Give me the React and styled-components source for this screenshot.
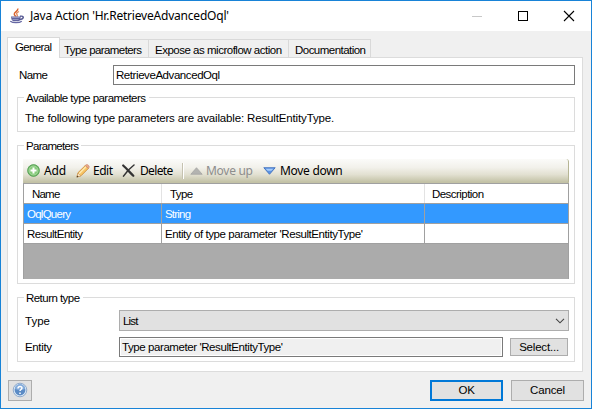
import React from "react";
import styled, { createGlobalStyle } from "styled-components";

const GlobalStyle = createGlobalStyle`
  * { box-sizing: border-box; }
  body { margin: 0; background: #fff; }
`;

const Text = styled.span`
  font: 11.5px/14px "Liberation Sans", Arial, sans-serif;
  letter-spacing: ${(p) => p.$track ?? 0}px;
  color: ${(p) => p.$color ?? "#000"};
  white-space: pre;
`;
const UiText = styled(Text)`
  font: 12px/16px "Noto Sans", sans-serif;
`;

const Window = styled.div`
  width: 592px;
  height: 409px;
  border: 1px solid #1883d7;
  background: #f0f0f0;
  display: flex;
  flex-direction: column;
  overflow: hidden;
`;
const TitleBar = styled.header`
  height: 30px;
  flex: none;
  background: #fff;
  display: flex;
  align-items: center;
  padding: 0 16px 0 9px;
`;
const Caption = styled(UiText)`
  margin-left: 4px;
  flex: 1;
`;
const WindowControls = styled.div`
  display: flex;
  gap: 34px;
  svg { display: block; }
`;
const Tabs = styled.nav`
  display: flex;
  align-items: flex-end;
  height: 27px;
  flex: none;
  margin: 0 0 -1px 6px;
`;
const Tab = styled.div`
  width: ${(p) => p.$width}px;
  height: ${(p) => (p.$active ? 21 : 19)}px;
  border: 1px solid #d9d9d9;
  border-width: ${(p) => (p.$active ? "1px 1px 0" : "1px 1px 1px 0")};
  background: ${(p) => (p.$active ? "#fff" : "#f0f0f0")};
  padding: ${(p) => (p.$active ? 2 : 3)}px 0 0 ${(p) => p.$inset}px;
  display: flex;
  position: relative;
  z-index: ${(p) => (p.$active ? 1 : 0)};
`;
const Panel = styled.main`
  width: 576px;
  height: 315px;
  flex: none;
  margin-left: 6px;
  border: 1px solid #dcdcdc;
  background: #fff;
  padding: 7px 7px 0 9px;
  display: flex;
  flex-direction: column;
`;
const NameRow = styled.div`
  display: flex;
  align-items: center;
  height: 20px;
  padding-left: 2px;
`;
const FieldLabel = styled(Text)`
  width: ${(p) => p.$width}px;
  flex: none;
`;
const TextField = styled.div`
  flex: 1;
  height: 20px;
  border: 1px solid #7a7a7a;
  background: ${(p) => (p.$readOnly ? "#f0f0f0" : "#fff")};
  box-shadow: inset 0 0 0 1px #fff;
  display: flex;
  align-items: center;
  padding-left: 2px;
`;
const Group = styled.section`
  height: ${(p) => p.$height}px;
  margin-top: ${(p) => p.$gap}px;
  border: 1px solid #dcdcdc;
  display: flex;
  flex-direction: column;
  padding: 0 5px;
  flex: none;
`;
const Legend = styled(Text)`
  align-self: flex-start;
  background: #fff;
  margin: -7px 0 1px 1px;
  padding: 0 3px 0 2px;
  height: 14px;
  flex: none;
`;
const GroupBody = styled.div`
  padding: 5px 0 0 2px;
  display: flex;
`;
const ToolBar = styled.div`
  height: 25px;
  margin-top: 5px;
  width: 546px;
  flex: none;
  display: flex;
  align-items: center;
  background: linear-gradient(#fbfbf9, #f2f1eb 35%, #e2e0d1 65%, #c3c2a6 96%);
  border-bottom: 1px solid #a3a380;
  border-right: 1px solid #b6b594;
  border-radius: 0 3px 2px 3px;
  padding: 0 0 1px 4px;
`;
const Tool = styled.div`
  display: flex;
  align-items: center;
  width: ${(p) => p.$width}px;
  svg { display: block; margin-right: ${(p) => p.$gap}px; flex: none; }
`;
const Divider = styled.i`
  width: 2px;
  height: 16px;
  background: #c5c2b0;
  border-right: 1px solid #fff;
  margin-right: 6px;
`;
const Grid = styled.div`
  width: 546px;
  height: 96px;
  margin-top: -1px;
  background: #ababab;
  border: 1px solid #a0a0a0;
  border-bottom: 0;
  flex: none;
`;
const GridRow = styled.div`
  display: grid;
  grid-template-columns: 138px 263px 143px;
  height: 20px;
  border-bottom: 1px solid #a0a0a0;
  background: ${(p) => (p.$selected ? "#3399ff" : "#fff")};
`;
const Cell = styled.div`
  display: flex;
  align-items: center;
  padding: ${(p) => (p.$head ? "1px 0 0 8px" : "0 0 0 3px")};
  border-right: 1px solid ${(p) => (p.$head ? "#e3e3e3" : "#a0a0a0")};
  &:last-child { border-right: 0; padding-left: 7px; }
`;
const FormRow = styled.div`
  display: flex;
  align-items: center;
  padding: 0 ${(p) => p.$inset ?? 0}px 0 2px;
  height: ${(p) => p.$height}px;
  margin-top: ${(p) => p.$gap}px;
`;
const Select = styled.div`
  width: 450px;
  height: 21px;
  border: 1px solid #adadad;
  background: #e1e1e1;
  display: flex;
  align-items: center;
  justify-content: space-between;
  padding: 1px 3px 0 3px;
`;
const Button = styled.button`
  width: ${(p) => p.$width}px;
  height: ${(p) => p.$height ?? 21}px;
  border: ${(p) => (p.$primary ? "2px solid #0078d7" : "1px solid #adadad")};
  background: #e1e1e1;
  padding: 0 0 1px;
  display: flex;
  align-items: center;
  justify-content: center;
  margin-left: ${(p) => p.$gap ?? 0}px;
  flex: none;
`;
const Footer = styled.footer`
  display: flex;
  padding: 8px 7px 0 7px;
`;
const Spacer = styled.div`
  flex: 1;
`;

const JavaIcon = () => (
  <svg width="16" height="16" viewBox="0 0 16 16" fill="none">
    <path d="M7.800.5C8.600 3 4 4 4.300 6.200c.1 1 1 1.600 1.400 2.300" stroke="#d9642f" strokeWidth="1.500" />
    <path d="M9 3.500C6.800 4.500 6 5.400 7 6.500c.7.800.4 1.500-.2 2.200" stroke="#e38a5d" strokeWidth="1.300" />
    <path d="M1 8.500h9.700c0 2.400-.8 4.200-2.300 4.800H3.300C1.800 12.500 1 10.700 1 8.500Z" fill="#61639f" />
    <path d="M1.600 9.500h8M2.500 11.500h6" stroke="#a9acd0" strokeWidth=".7" />
    <path d="M10 8.300c4.600-1 4.500 2.700-.8 3.500" stroke="#565992" strokeWidth="1.400" />
    <path d="M.3 13.200c2.500 1.900 9 1.900 11.500 0" stroke="#6567a3" strokeWidth="1.200" />
  </svg>
);
const AddIcon = () => (
  <svg width="13" height="13" viewBox="0 0 13 13">
    <circle cx="6.500" cy="6.500" r="5.900" fill="#6fb865" stroke="#4f9a50" strokeWidth=".8" />
    <circle cx="6.500" cy="6.500" r="4.500" fill="#88ca7c" stroke="#b3dfaa" strokeWidth=".7" />
    <path d="M6.500 3.500v6M3.500 6.500h6" stroke="#fff" strokeWidth="2" />
  </svg>
);
const EditIcon = () => (
  <svg width="14" height="14" viewBox="0 0 14 14">
    <path d="M1 13l1-4.300L9.300 1.500l3 3L5 11.800Z" fill="#f8c565" stroke="#c9852f" strokeWidth=".8" />
    <path d="M3 9.700l7.200-7.200" stroke="#fde9b3" strokeWidth="1.300" />
    <path d="M9.300 1.500c1-1.200 2.200-1.200 3.200-.1 1 1 1 2-.2 3.100Z" fill="#e8a98c" stroke="#c98062" strokeWidth=".6" />
    <path d="M1 13l1-4 2.900 2.800Z" fill="#f7e4c6" stroke="#c58e4c" strokeWidth=".5" />
    <path d="M.6 13.400l.6-2 1.400 1.400Z" fill="#4a3a2a" />
  </svg>
);
const DeleteIcon = () => (
  <svg width="13" height="14" viewBox="0 0 13 14" fill="none" stroke="#333" strokeLinecap="round">
    <path d="M1.200 1.500C4 4 8 8.500 11.300 11.800" strokeWidth="2.200" />
    <path d="M12 1C8 4 4 8.500 1.500 12.200" strokeWidth="1.500" />
  </svg>
);
const UpIcon = () => (
  <svg width="13" height="8" viewBox="0 0 13 8">
    <path d="M.8 7.300L6.500.7l5.700 6.600Z" fill="#b3b3b0" stroke="#a2a2a0" strokeWidth=".7" />
  </svg>
);
const DownIcon = () => (
  <svg width="13" height="8" viewBox="0 0 13 8">
    <path d="M.8.700h11.400L6.500 7.300Z" fill="#5c93e4" stroke="#3769b9" strokeWidth=".8" />
    <path d="M2.500 1.700h8L8.300 3.800H4.600Z" fill="#a6ccfa" />
  </svg>
);
const HelpIcon = () => (
  <svg width="16" height="16" viewBox="0 0 16 16">
    <circle cx="8" cy="8" r="6.800" fill="#dce9f5" stroke="#7c9cc4" strokeWidth=".8" />
    <circle cx="8" cy="8" r="5.400" fill="#5b8bc5" />
    <path d="M3 7a5 5 0 0 1 10 0c-3 1.200-7 1.200-10 0Z" fill="#86addb" />
    <path d="M6 6.500c0-2.600 4-2.500 4-.4C10 7.500 8 7.500 8 9M8 10.400v1.500" fill="none" stroke="#fff" strokeWidth="1.500" />
  </svg>
);

const tabs = [
  { label: "General", width: 53, inset: 7, track: -0.65, active: true },
  { label: "Type parameters", width: 89, inset: 4, track: -0.59 },
  { label: "Expose as microflow action", width: 140, inset: 6, track: -0.49 },
  { label: "Documentation", width: 82, inset: 6, track: -0.53 },
];

const rows = [
  { name: ["OqlQuery", -0.75], type: ["String", -0.8], selected: true },
  { name: ["ResultEntity", -0.48], type: ["Entity of type parameter 'ResultEntityType'", -0.43] },
];

export default function App() {
  return (
    <>
      <GlobalStyle />
      <Window>
        <TitleBar>
          <JavaIcon />
          <Caption $track={-0.206}>Java Action 'Hr.RetrieveAdvancedOql'</Caption>
          <WindowControls>
            <svg width="12" height="12"><path d="M1 6.500h10" stroke="#c8c8c8" /></svg>
            <svg width="12" height="12"><rect x="1.500" y="1.500" width="9" height="9" fill="none" stroke="#000" /></svg>
            <svg width="12" height="12"><path d="M1 1l10 10M11 1L1 11" stroke="#000" strokeWidth="1.100" /></svg>
          </WindowControls>
        </TitleBar>
        <Tabs>
          {tabs.map((t) => (
            <Tab key={t.label} $width={t.width} $inset={t.inset} $active={t.active}>
              <Text $track={t.track}>{t.label}</Text>
            </Tab>
          ))}
        </Tabs>
        <Panel>
          <NameRow>
            <FieldLabel $width={94} $track={-0.56}>Name</FieldLabel>
            <TextField><Text $track={-0.43}>RetrieveAdvancedOql</Text></TextField>
          </NameRow>
          <Group $height={35} $gap={12}>
            <Legend $track={-0.53}>Available type parameters</Legend>
            <GroupBody>
              <Text $track={-0.15}>The following type parameters are available: ResultEntityType.</Text>
            </GroupBody>
          </Group>
          <Group $height={139} $gap={13}>
            <Legend $track={-0.71}>Parameters</Legend>
            <ToolBar>
              <Tool $width={49} $gap={4}><AddIcon /><UiText $track={-0.21}>Add</UiText></Tool>
              <Tool $width={46} $gap={3}><EditIcon /><UiText $track={-0.49}>Edit</UiText></Tool>
              <Tool $width={60} $gap={5}><DeleteIcon /><UiText $track={-0.65}>Delete</UiText></Tool>
              <Divider />
              <Tool $width={73} $gap={3}><UpIcon /><UiText $track={-0.28} $color="#8d8d8d">Move up</UiText></Tool>
              <Tool $width={90} $gap={4}><DownIcon /><UiText $track={-0.3}>Move down</UiText></Tool>
            </ToolBar>
            <Grid>
              <GridRow>
                <Cell $head><Text $track={-0.8}>Name</Text></Cell>
                <Cell $head><Text $track={-0.6}>Type</Text></Cell>
                <Cell $head><Text $track={-0.55}>Description</Text></Cell>
              </GridRow>
              {rows.map((r) => (
                <GridRow key={r.name[0]} $selected={r.selected}>
                  <Cell><Text $track={r.name[1]} $color={r.selected ? "#fff" : "#000"}>{r.name[0]}</Text></Cell>
                  <Cell><Text $track={r.type[1]} $color={r.selected ? "#fff" : "#000"}>{r.type[0]}</Text></Cell>
                  <Cell />
                </GridRow>
              ))}
            </Grid>
          </Group>
          <Group $height={65} $gap={13}>
            <Legend $track={-0.54}>Return type</Legend>
            <FormRow $height={21} $gap={4}>
              <FieldLabel $width={94}>Type</FieldLabel>
              <Select>
                <Text $track={-0.8}>List</Text>
                <svg width="10" height="6"><path d="M1 .8l4 4 4-4" fill="none" stroke="#444" strokeWidth="1.100" /></svg>
              </Select>
            </FormRow>
            <FormRow $height={20} $gap={6} $inset={1}>
              <FieldLabel $width={94} $track={-0.35}>Entity</FieldLabel>
              <TextField $readOnly><Text $track={-0.42}>Type parameter 'ResultEntityType'</Text></TextField>
              <Button $width={58} $height={18} $gap={7}><Text $track={-0.2}>Select...</Text></Button>
            </FormRow>
          </Group>
        </Panel>
        <Footer>
          <Button $width={24}><HelpIcon /></Button>
          <Spacer />
          <Button $width={73} $primary><Text $track={-0.2}>OK</Text></Button>
          <Button $width={73} $gap={8}><Text $track={-0.17}>Cancel</Text></Button>
        </Footer>
      </Window>
    </>
  );
}
